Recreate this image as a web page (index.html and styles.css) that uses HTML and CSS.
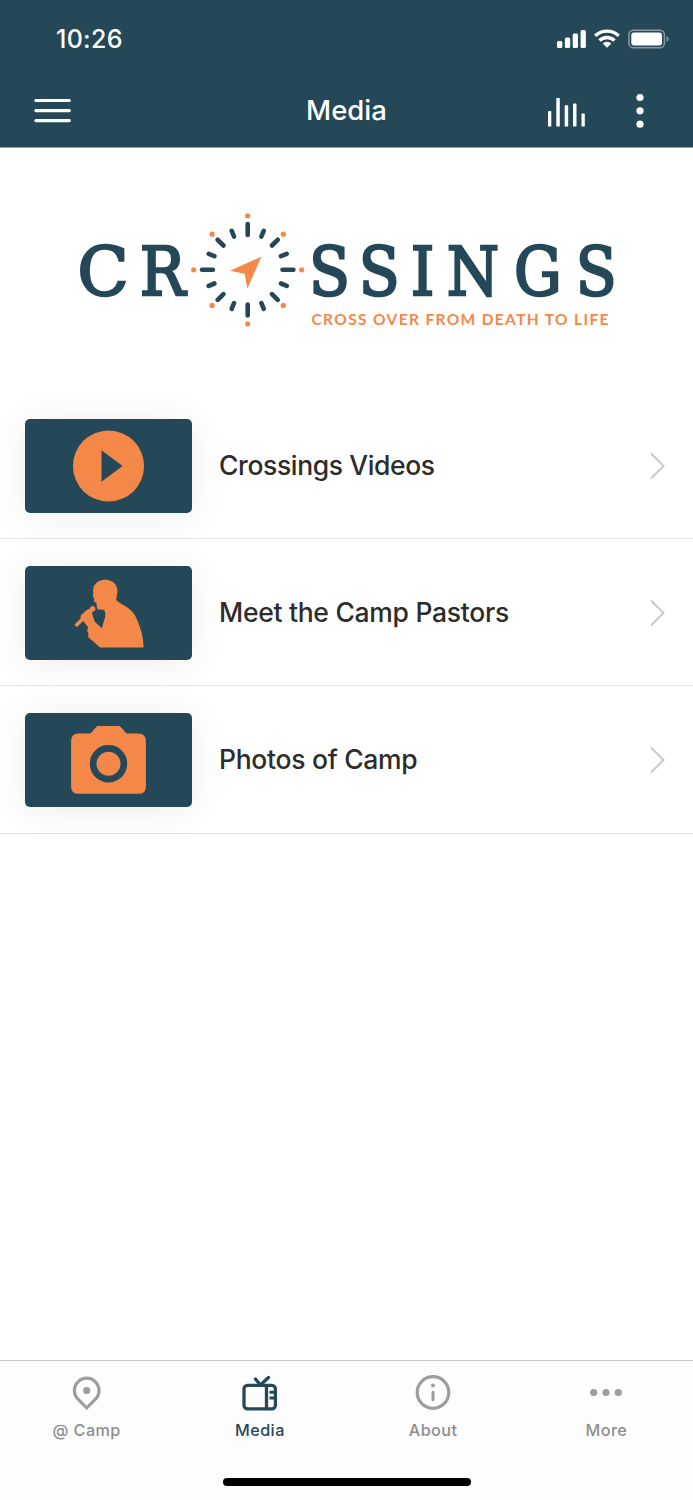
FILE: index.html
```html
<!DOCTYPE html>
<html lang="en">
<head>
<meta charset="utf-8">
<title>Media</title>
<link rel="stylesheet" href="styles.css">
</head>
<body>
<div class="app">
  <header class="header">
    <div class="status">
      <span class="time">10:26</span>
      <svg class="status-icons" width="112" height="20" viewBox="0 0 112 20">
        <g fill="#fff">
          <rect x="0" y="12" width="5.3" height="7" rx="1.5"/>
          <rect x="7.9" y="8.5" width="5.3" height="10.5" rx="1.5"/>
          <rect x="15.7" y="4.6" width="5.3" height="14.4" rx="1.5"/>
          <rect x="23.6" y="1" width="5.3" height="18" rx="1.5"/>
          <path d="M50 18.8L45.7 14.5A6.2 6.2 0 0 1 54.3 14.5Z"/>
          <rect x="74.3" y="3.6" width="30.7" height="12.8" rx="2.6"/>
        </g>
        <g fill="none" stroke="#fff" stroke-width="3.4">
          <path d="M38.2 6.8A17.2 17.2 0 0 1 61.8 6.8"/>
          <path d="M42.5 11.5A10.8 10.8 0 0 1 57.5 11.5"/>
        </g>
        <rect x="71.9" y="1.2" width="35.5" height="17.6" rx="4.6" fill="none" stroke="#879ba4" stroke-width="1.5"/>
        <path d="M109.5 7Q111.6 8 111.6 10T109.5 13Z" fill="#879ba4"/>
      </svg>
    </div>
    <div class="nav">
      <svg width="38" height="26" viewBox="0 0 38 26" stroke="#fff" stroke-width="3.2" stroke-linecap="round"><path d="M1.9 2.5H35.3M1.9 12.6H35.3M1.9 22.6H35.3"/></svg>
      <h1 class="title">Media</h1>
      <div class="nav-actions">
        <svg width="40" height="34" viewBox="0 0 40 34" fill="#fff"><rect x="1" y="17" width="3.3" height="15.6" rx=".7"/><rect x="9.3" y="4" width="3.5" height="28.6" rx=".7"/><rect x="17.7" y="11.3" width="3.5" height="21.3" rx=".7"/><rect x="26" y="9.5" width="3.5" height="23.1" rx=".7"/><rect x="34.5" y="19.5" width="3.3" height="13.1" rx=".7"/></svg>
        <svg width="8" height="36" viewBox="0 0 8 36" fill="#fff"><circle cx="4" cy="4.5" r="3.6"/><circle cx="4" cy="17.8" r="3.6"/><circle cx="4" cy="31.2" r="3.6"/></svg>
      </div>
    </div>
  </header>

  <main class="main">
    <svg class="logo" width="693" height="245" viewBox="0 147 693 245">
      <g class="wordmark">
        <text transform="translate(77.5 294.7) scale(.98 1)">C</text>
        <text transform="translate(139.8 294.7) scale(.89 1)">R</text>
        <text transform="translate(309 294.7) scale(.88 1)" x="0 56.5 115.5 156.5 233 303">SSINGS</text>
      </g>
      <g transform="translate(247.7 269.8)">
        <g stroke="#244858" stroke-width="4.6" stroke-linecap="round">
          <path d="M0-45.7V-34.8M0 34.8V45.7M-45.7 0H-34.8M34.8 0H45.7"/>
          <path d="M-30-30L-24.3-24.3M30-30L24.3-24.3M-30 30L-24.3 24.3M30 30L24.3 24.3"/>
          <path d="M-16-39L-13.7-33.3M16-39L13.7-33.3M-16 39L-13.7 33.3M16 39L13.7 33.3M-39-16L-33.3-13.7M39-16L33.3-13.7M-39 16L-33.3 13.7M39 16L33.3 13.7"/>
        </g>
        <g fill="#f38849">
          <circle cx="0" cy="-54" r="2.6"/><circle cx="0" cy="54" r="2.6"/><circle cx="-54" cy="0" r="2.6"/><circle cx="54" cy="0" r="2.6"/>
          <circle cx="-35.6" cy="-35.6" r="2.6"/><circle cx="35.6" cy="-35.6" r="2.6"/><circle cx="-35.6" cy="35.6" r="2.6"/><circle cx="35.6" cy="35.6" r="2.6"/>
          <path d="M13.6-13.1L-.4 18.9L-3 3.9L-17.7.9Z"/>
        </g>
      </g>
      <text class="tagline" x="311.5" y="325.3" textLength="297">CROSS OVER FROM DEATH TO LIFE</text>
    </svg>

    <ul class="list">
      <li class="row">
        <svg class="thumb" viewBox="76 56 500 281"><circle cx="326" cy="196.5" r="106.5" fill="#f38849"/><path d="M305 149L368 196.5L305 244Z" fill="#244858"/></svg>
        <span class="label videos">Crossings Videos</span>
        <svg class="chevron" width="18" height="30" viewBox="0 0 18 30"><path d="M2 2.500L14.500 15L2 27.500"/></svg>
      </li>
      <li class="row">
        <svg class="thumb" viewBox="76 47.5 500 281"><path fill="#f38849" d="M301 291L265 260L266 249L262 241L265 231L250 212L233 229Q224 229 225 222L242 205L243 195L262 178L270 176Q270 167 281 167Q288 170 287 179L276 187L285 214L306 234L316 199V184L311 178L292 177L290 157L282 154L284 147L279 137Q281 132 280 119Q282 90 316 88Q352 91 353 124L349 149L360 158Q404 180 412 209Q430 250 431 291Z"/></svg>
        <span class="label pastors">Meet the Camp Pastors</span>
        <svg class="chevron" width="18" height="30" viewBox="0 0 18 30"><path d="M2 2.500L14.500 15L2 27.500"/></svg>
      </li>
      <li class="row">
        <svg class="thumb" viewBox="76 69.5 500 281"><path fill="#f38849" d="M292 108H360L380 131H416Q438 131 438 154V289Q438 311 416 311H236Q214 311 214 289V154Q214 131 236 131H272Z"/><circle cx="326" cy="221" r="46" fill="none" stroke="#244858" stroke-width="20"/></svg>
        <span class="label photos">Photos of Camp</span>
        <svg class="chevron" width="18" height="30" viewBox="0 0 18 30"><path d="M2 2.500L14.500 15L2 27.500"/></svg>
      </li>
    </ul>
  </main>

  <footer class="footer">
    <nav class="tabs">
      <div class="tab">
        <svg width="40" height="40" viewBox="0 0 40 40" fill="none" stroke="#9d9d9d" stroke-width="3.2" stroke-linejoin="round"><path d="M19.7 35L11 26.2A12.3 12.3 0 1 1 28.4 26.2Z"/><circle cx="19.7" cy="17.5" r="3.6" fill="#9d9d9d" stroke="none"/></svg>
        <span>@ Camp</span>
      </div>
      <div class="tab active">
        <svg width="40" height="40" viewBox="0 0 40 40" fill="none" stroke="#244858" stroke-width="3.3" stroke-linecap="round"><rect x="4" y="12.3" width="31.4" height="23.5" rx="3.5"/><path d="M26.500 13V35.500M15.500 6L20 11.500M28.500 4.500L21 11.500"/><path d="M29.500 19.300H34M29.500 25H34" stroke-linecap="butt" stroke-width="3"/></svg>
        <span>Media</span>
      </div>
      <div class="tab">
        <svg width="40" height="40" viewBox="0 0 40 40"><circle cx="20" cy="19.5" r="15.8" fill="none" stroke="#9d9d9d" stroke-width="3.2"/><circle cx="20" cy="12.5" r="1.9" fill="#9d9d9d"/><path d="M20 19.200V26.800" stroke="#9d9d9d" stroke-width="3" stroke-linecap="round"/></svg>
        <span>About</span>
      </div>
      <div class="tab">
        <svg width="40" height="40" viewBox="0 0 40 40" fill="#9d9d9d"><circle cx="7.7" cy="19.5" r="3.6"/><circle cx="20" cy="19.5" r="3.6"/><circle cx="32.3" cy="19.5" r="3.6"/></svg>
        <span>More</span>
      </div>
    </nav>
    <div class="home-bar"></div>
  </footer>
</div>
</body>
</html>
```

FILE: styles.css
```css
* { box-sizing: border-box; }
body {
  margin: 0;
  background: #fff;
  font-family: Inter, Roboto, sans-serif;
}
.app {
  display: flex;
  flex-direction: column;
  height: 1500px;
  overflow: hidden;
}
.header {
  height: 147px;
  flex: none;
  background: #244858;
  color: #fff;
  box-shadow: 0 .5px 0 #244858;
}
.status {
  display: flex;
  justify-content: space-between;
  align-items: center;
  height: 77px;
  padding: 0 24px 0 56px;
}
.time {
  font-size: 25px;
  font-weight: 500;
  letter-spacing: .3px;
}
.nav {
  display: grid;
  grid-template-columns: 1fr auto 1fr;
  align-items: center;
  height: 67px;
  padding: 0 49px 0 34px;
}
.title {
  margin: 0;
  padding: 0 0 1px 15px;
  font-size: 27.5px;
  font-weight: 500;
}
.nav-actions {
  display: flex;
  justify-content: flex-end;
  align-items: center;
  gap: 49px;
}
.main { flex: 1; }
.logo { display: block; }
.wordmark {
  font-family: "DejaVu Serif", serif;
  font-size: 68px;
  fill: #244858;
  stroke: #244858;
  stroke-width: 2.5px;
}
.tagline {
  font-family: Lato, sans-serif;
  font-size: 15.5px;
  font-weight: 700;
  fill: #f38849;
}
.list {
  margin: 0;
  padding: 0;
  list-style: none;
}
.row {
  display: flex;
  align-items: center;
  height: 147.2px;
  padding: 1.5px 26px 0 25px;
  border-bottom: 1px solid #e4e4e6;
}
.thumb {
  width: 167px;
  height: 94px;
  border-radius: 5px;
  background: #244858;
  box-shadow: 0 3px 36px rgba(0, 0, 0, .08);
}
.label {
  flex: 1;
  margin-left: 27px;
  padding-bottom: 2px;
  color: #2c2c2c;
  font-size: 26.5px;
  font-weight: 450;
}
.videos { letter-spacing: -.38px; }
.pastors { letter-spacing: -.29px; }
.photos { letter-spacing: -.3px; }
.chevron {
  fill: none;
  stroke: #c7c7cc;
  stroke-width: 2;
}
.footer {
  height: 140px;
  border-top: 1px solid #cbcbcd;
  background: #fdfdfd;
}
.tabs {
  display: grid;
  grid-template-columns: repeat(4, 1fr);
  height: 117px;
  padding-top: 12px;
}
.tab {
  display: flex;
  flex-direction: column;
  align-items: center;
  gap: 6px;
  color: #8e8e8e;
  font-size: 16.2px;
  font-weight: 450;
  line-height: 22px;
  letter-spacing: .45px;
}
.active {
  color: #244858;
  font-weight: 500;
}
.home-bar {
  width: 248px;
  height: 8px;
  margin: 0 auto;
  border-radius: 4px;
  background: #000;
}
```
